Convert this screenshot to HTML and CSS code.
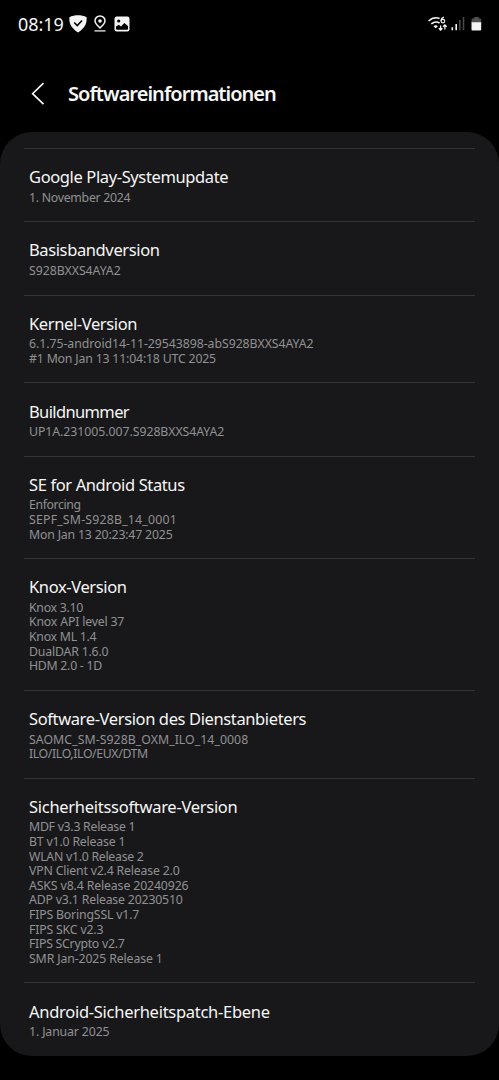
FILE: index.html
```html
<!DOCTYPE html>
<html lang="de">
<head>
<meta charset="utf-8">
<title>Softwareinformationen</title>
<link rel="stylesheet" href="styles.css">
</head>
<body>
<div class="status">
  <span class="clock">08:19</span>
  <svg class="ic-shield" width="18" height="18" viewBox="0 0 18 18"><path d="M9 .2C11.500.2 15.500.8 17.600 2.200C18 8 16.500 12.500 9 17.500C1.500 12.500 0 8 .4 2.200C2.500.8 6.500.2 9 .2Z" fill="#f4f4f4"/><path d="M5.200 7.500L8.300 10.600L13 5.400" fill="none" stroke="#000" stroke-width="1.500"/></svg>
  <svg class="ic-pin" width="12" height="18" viewBox="0 0 12 18"><path d="M6 13C3.500 10.400 1 8.400 1 5.900A5 5 0 0 1 11 5.900C11 8.400 8.500 10.400 6 13Z" fill="none" stroke="#f4f4f4" stroke-width="1.500"/><circle cx="6" cy="6" r="1.800" fill="#f4f4f4"/><path d="M.5 15.900H11.500" stroke="#d8d8d8" stroke-width="1.400"/></svg>
  <svg class="ic-photo" width="16" height="16" viewBox="0 0 16 16"><rect x=".5" y=".5" width="15" height="15" rx="2.200" fill="#f4f4f4"/><circle cx="4.700" cy="5" r="1.600" fill="#000"/><path d="M2 12.800V10.600L4.800 8.700L7 10.500L10.300 6.900L14 10V12.800Q14 13.800 13 13.800H3Q2 13.800 2 12.800Z" fill="#000"/></svg>
  <svg class="ic-net" width="56" height="18" viewBox="0 0 56 18">
    <g fill="none" stroke="#f4f4f4" stroke-width="1.600">
      <path d="M.6 6Q5.500 1.400 11.600 3.400"/><path d="M3.300 8.900Q7.400 5.500 11.600 8"/></g>
    <path d="M5.500 11.200Q7.700 9.400 9.900 11.200L7.700 13.200Z" fill="#f4f4f4"/>
    <path d="M15.900 2.100Q13.100 2.900 13.100 6" fill="none" stroke="#f4f4f4" stroke-width="1.200"/><circle cx="14.900" cy="6.100" r="1.800" fill="none" stroke="#f4f4f4" stroke-width="1.200"/>
    <path d="M12.600 10.500V15M10.800 13.200L12.600 15L14.400 13.200M16.900 14.500V9.900M15.100 11.700L16.900 9.900L18.700 11.700" fill="none" stroke="#f4f4f4" stroke-width="1.300"/>
    <path d="M24.300 12.300V15.200M28.200 9V15.200" stroke="#f4f4f4" stroke-width="1.600"/><path d="M31.800 5V15.200M35.500 2V15.200" stroke="#484848" stroke-width="1.600"/>
    <path d="M43.500 8V4.500Q43.500 3.500 44.500 3.500H46.200V2H50.800V3.500H52.200Q53.200 3.500 53.200 4.500V8Z" fill="#515151"/><path d="M43.500 7.200H53.200V14.500Q53.200 15.500 52.200 15.500H44.500Q43.500 15.500 43.500 14.500Z" fill="#f4f4f4"/>
  </svg>
</div>
<header class="head">
  <svg width="14" height="24" viewBox="0 0 14 24"><path d="M12.500 1.200L1.600 11.700L12.500 22.200" fill="none" stroke="#fafafa" stroke-width="1.600"/></svg>
  <h1>Softwareinformationen</h1>
</header>
<main class="card">
  <section class="item"><h2>Google Play-Systemupdate</h2><p class="snug">1. November 2024</p></section>
  <section class="item"><h2>Basisbandversion</h2><p class="loose">S928BXXS4AYA2</p></section>
  <section class="item"><h2>Kernel-Version</h2><p class="loose">6.1.75-android14-11-29543898-abS928BXXS4AYA2</p><p>#1 Mon Jan 13 11:04:18 UTC 2025</p></section>
  <section class="item"><h2 class="narrow">Buildnummer</h2><p class="loose">UP1A.231005.007.S928BXXS4AYA2</p></section>
  <section class="item"><h2>SE for Android Status</h2><p class="tight">Enforcing</p><p class="wide">SEPF_SM-S928B_14_0001</p><p>Mon Jan 13 20:23:47 2025</p></section>
  <section class="item"><h2>Knox-Version</h2><p class="snug">Knox 3.10</p><p>Knox API level 37</p><p class="snug">Knox ML 1.4</p><p>DualDAR 1.6.0</p><p class="snug">HDM 2.0 - 1D</p></section>
  <section class="item"><h2>Software-Version des Dienstanbieters</h2><p class="roomy">SAOMC_SM-S928B_OXM_ILO_14_0008</p><p class="tight">ILO/ILO,ILO/EUX/DTM</p></section>
  <section class="item"><h2 class="broad">Sicherheitssoftware-Version</h2><p class="snug">MDF v3.3 Release 1</p><p>BT v1.0 Release 1</p><p class="snug">WLAN v1.0 Release 2</p><p>VPN Client v2.4 Release 2.0</p><p class="open">ASKS v8.4 Release 20240926</p><p>ADP v3.1 Release 20230510</p><p>FIPS BoringSSL v1.7</p><p>FIPS SKC v2.3</p><p class="snug">FIPS SCrypto v2.7</p><p class="open">SMR Jan-2025 Release 1</p></section>
  <section class="item"><h2 class="broad">Android-Sicherheitspatch-Ebene</h2><p class="open">1. Januar 2025</p></section>
</main>
</body>
</html>
```
FILE: styles.css
```css
* { box-sizing: border-box; }
body {
  margin: 0;
  height: 1080px;
  background: #000;
  color: #f6f6f6;
  font-family: "Noto Sans", "Open Sans", sans-serif;
  overflow: hidden;
}
svg { display: block; flex: none; }
.status { display: flex; height: 48px; padding: 0 15px 0 18px; }
.clock { width: 46px; font-size: 18px; line-height: 48px; letter-spacing: -0.05px; white-space: nowrap; }
.ic-shield { margin: 15px 0 0 5px; }
.ic-pin { margin: 15px 0 0 7px; }
.ic-photo { margin: 16px 0 0 8px; }
.ic-net { margin: 15px 0 0 auto; }
.head { display: flex; align-items: center; gap: 23px; height: 84px; padding: 8px 0 0 31px; }
h1 { margin: 0; font-size: 20px; font-weight: 600; line-height: 28px; letter-spacing: -0.97px; white-space: nowrap; }
.card {
  width: 499px;
  height: 924px;
  padding: 16px 24px 0;
  border-radius: 32px;
  background: #18181a;
}
.item { border-top: 1.3px solid #343436; padding: 17.200px 5px 16px; }
h2 { margin: 0 0 2.500px; font-size: 16.500px; font-weight: 400; line-height: 22px; letter-spacing: -0.38px; white-space: nowrap; }
h2.narrow { letter-spacing: -0.63px; }
h2.broad { letter-spacing: -0.28px; }
p { margin: 0; color: #919193; font-size: 12.300px; line-height: 14.600px; letter-spacing: -0.18px; white-space: nowrap; }
.tight { letter-spacing: -0.38px; }
.snug { letter-spacing: -0.27px; }
.open { letter-spacing: -0.13px; }
.loose { letter-spacing: -0.05px; }
.roomy { letter-spacing: 0.05px; }
.wide { letter-spacing: 0.2px; }
```
